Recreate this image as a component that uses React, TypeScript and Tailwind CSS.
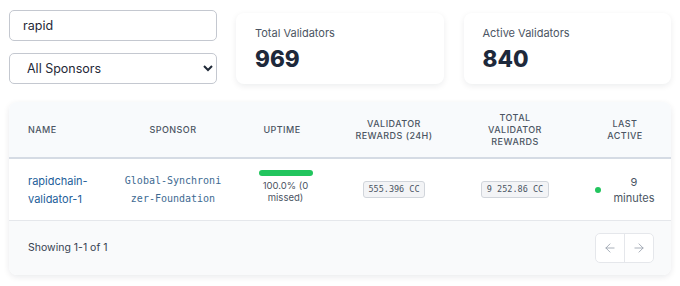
import { ArrowLeft, ArrowRight } from "lucide-react";

const cols = "grid grid-cols-[101px_126px_92px_132px_110px_101px]";
const mono = "font-['DejaVu_Sans_Mono','Liberation_Mono',monospace]";

const StatCard = ({ label, value }: { label: string; value: string }) => {
   return (
      <div className="flex-1 h-[71px] rounded-lg bg-white shadow-[0_2px_6px_rgba(15,23,42,0.08)] px-[19px] pt-[12px]">
         <p className="text-[11px] leading-[16px] text-[#4b5563]">{label}</p>
         <p className="text-[22.5px] leading-[26px] font-extrabold text-[#1e293b] mt-[5px]">
            {value}
         </p>
      </div>
   );
};

const App = () => {
   return (
      <main className="w-[680px] h-[286px] bg-white font-['Inter',sans-serif] text-[#1f2937]">
         <section className="px-[9px] pt-[10px]">
            {/* filters + stats */}
            <div className="flex gap-[19px]">
               <div className="w-[208px] flex flex-col gap-[12px]">
                  <input
                     readOnly
                     value="rapid"
                     className="h-[31px] w-full rounded-[5px] border border-[#c4c8d0] px-[13px] text-[12.5px] text-[#1f2937] outline-none"
                  />
                  <select className="h-[31px] w-full rounded-[5px] border border-[#c4c8d0] pl-[13px] pr-[4px] text-[12.5px] text-[#1f2937] bg-white outline-none">
                     <option>All Sponsors</option>
                  </select>
               </div>
               <div className="flex flex-1 gap-[20px] pt-[3px]">
                  <StatCard label="Total Validators" value="969" />
                  <StatCard label="Active Validators" value="840" />
               </div>
            </div>

            {/* table */}
            <div className="mt-[18px] rounded-lg bg-white shadow-[0_2px_6px_rgba(15,23,42,0.09)] overflow-hidden">
               <div
                  className={`${cols} h-[57px] items-center bg-[#f8fafc] border-b-2 border-[#d5dbe4] text-[9px] leading-[12px] font-medium tracking-[0.05em] uppercase text-[#4b5563]`}>
                  <div className="pl-[19px]">Name</div>
                  <div className="text-center">Sponsor</div>
                  <div className="text-center">Uptime</div>
                  <div className="text-center w-[84px] mx-auto">Validator Rewards (24h)</div>
                  <div className="text-center w-[60px] mx-auto">Total Validator Rewards</div>
                  <div className="text-center w-[44px] mx-auto pl-[9px] box-content">Last Active</div>
               </div>

               <div className={`${cols} h-[62px] items-center border-b border-[#e5e7eb]`}>
                  <div className="pl-[19px] text-[11px] leading-[18px] text-[#23609a]">
                     rapidchain-
                     <br />
                     validator-1
                  </div>
                  <div className={`${mono} text-center text-[10px] leading-[18px] text-[#3d6a92]`}>
                     Global-Synchroni
                     <br />
                     zer-Foundation
                  </div>
                  <div className="flex flex-col items-center pl-[7px] -mt-[5px]">
                     <div className="w-[54px] h-[6px] rounded-full bg-[#22c55e]" />
                     <p className="mt-[4px] text-center text-[9.5px] leading-[12px] text-[#4b5563]">
                        100.0% (0
                        <br />
                        missed)
                     </p>
                  </div>
                  <div className="flex justify-center">
                     <span
                        className={`${mono} text-[8.5px] leading-[15px] px-[4px] rounded-[3px] border border-[#d1d5db] bg-[#f3f4f6] text-[#4b5563]`}>
                        555.396 CC
                     </span>
                  </div>
                  <div className="flex justify-center">
                     <span
                        className={`${mono} text-[8.5px] leading-[15px] px-[5px] rounded-[3px] border border-[#d1d5db] bg-[#f3f4f6] text-[#4b5563]`}>
                        9 252.86 CC
                     </span>
                  </div>
                  <div className="flex items-center justify-center gap-[12px] pl-[9px]">
                     <span className="w-[6px] h-[6px] rounded-full bg-[#22c55e]" />
                     <p className="text-center text-[11px] leading-[16px] text-[#4b5563]">
                        9
                        <br />
                        minutes
                     </p>
                  </div>
               </div>

               <div className="h-[54px] flex items-center justify-between bg-[#f9fafb] pl-[19px] pr-[17px]">
                  <p className="text-[10.5px] text-[#374151]">Showing 1-1 of 1</p>
                  <div className="flex rounded-[5px] border border-[#e5e7eb] bg-white overflow-hidden">
                     <button className="w-[29px] h-[28px] flex items-center justify-center border-r border-[#e5e7eb] text-[#9ca3af]">
                        <ArrowLeft size={14} strokeWidth={1.5} />
                     </button>
                     <button className="w-[28px] h-[28px] flex items-center justify-center text-[#9ca3af]">
                        <ArrowRight size={14} strokeWidth={1.5} />
                     </button>
                  </div>
               </div>
            </div>
         </section>
      </main>
   );
};

export default App;
